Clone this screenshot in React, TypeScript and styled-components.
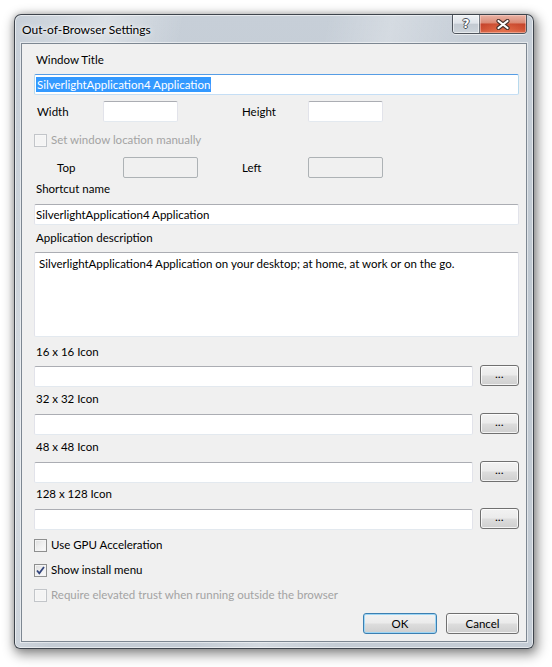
import React from "react";
import styled, { createGlobalStyle, css } from "styled-components";

const FONT = `"Lato", "Noto Sans", sans-serif`;

const GlobalStyle = createGlobalStyle`
  html, body { margin: 0; padding: 0; background: #ffffff; }
  body { font-family: ${FONT}; font-size: 11.5px; color: #000; }
  * { box-sizing: border-box; }
`;

const Page = styled.div`
  width: 552px;
  height: 667px;
  padding: 14px 0 0 14px;
`;

const Window = styled.div`
  width: 520px;
  height: 635px;
  display: flex;
  flex-direction: column;
  padding: 0 6px 6px 6px;
  border: 1px solid rgba(38, 44, 52, 0.85);
  border-radius: 7px 7px 6px 6px;
  background:
    linear-gradient(102deg,
      rgba(255,255,255,0) 0%, rgba(255,255,255,0.35) 14%, rgba(255,255,255,0) 26%,
      rgba(255,255,255,0) 48%, rgba(255,255,255,0.25) 58%, rgba(255,255,255,0) 70%),
    linear-gradient(180deg, #c7cfd8 0%, #bfc8d1 40%, #c4ccd5 100%);
  box-shadow:
    2px 4px 12px 2px rgba(0, 0, 0, 0.42),
    0 0 6px rgba(0, 0, 0, 0.18),
    inset 0 0 0 1px rgba(255, 255, 255, 0.55);
`;

const TitleBar = styled.div`
  height: 28px;
  flex: none;
  display: flex;
  align-items: flex-start;
  justify-content: space-between;
`;

const TitleText = styled.div`
  margin: 7px 0 0 1px;
  font-size: 12px;
  line-height: 16px;
  color: #000;
  text-shadow: 0 0 6px rgba(255, 255, 255, 0.95), 0 0 3px rgba(255, 255, 255, 0.8);
`;

const CaptionGroup = styled.div`
  display: flex;
  height: 19px;
  width: 75px;
  border: 1px solid rgba(58, 64, 72, 0.85);
  border-top: none;
  border-radius: 0 0 4px 4px;
  overflow: hidden;
  box-shadow: 0 1px 0 rgba(255, 255, 255, 0.6);
`;

const CaptionButton = styled.div<{ $kind: "help" | "close" }>`
  height: 100%;
  display: flex;
  align-items: center;
  justify-content: center;
  ${(p) =>
    p.$kind === "help"
      ? css`
          width: 27px;
          border-right: 1px solid rgba(70, 76, 84, 0.7);
          background: linear-gradient(180deg, #eef1f4 0%, #dfe4ea 45%, #c3cad2 52%, #ccd3da 100%);
          box-shadow: inset 0 0 0 1px rgba(255, 255, 255, 0.55);
        `
      : css`
          flex: 1;
          background:
            radial-gradient(ellipse 60% 55% at 50% 85%, rgba(235, 120, 80, 0.75), rgba(235, 120, 80, 0) 100%),
            linear-gradient(180deg, #e9b3a5 0%, #db8c78 42%, #c4432b 52%, #c9472d 78%, #d76a4e 100%);
          box-shadow: inset 0 0 0 1px rgba(255, 220, 210, 0.45);
        `}
`;

const HelpGlyph = styled.span`
  font-family: "DejaVu Sans", sans-serif;
  font-weight: bold;
  font-size: 12px;
  line-height: 12px;
  color: #ffffff;
  text-shadow: 1px 0 0 #4b5159, -1px 0 0 #4b5159, 0 1px 0 #4b5159, 0 -1px 0 #4b5159;
`;

const Client = styled.div`
  flex: 1;
  display: flex;
  flex-direction: column;
  padding: 0 7px 0 12px;
  background: #f0f0f0;
  border: 1px solid #7d8792;
  box-shadow: 0 0 0 1px rgba(255, 255, 255, 0.5);
`;

const Label = styled.div<{ $mt: number; $disabled?: boolean }>`
  margin-top: ${(p) => p.$mt}px;
  height: 16px;
  flex: none;
  line-height: 16px;
  padding-left: 2px;
  white-space: nowrap;
  color: ${(p) => (p.$disabled ? "#a3a3a3" : "#000")};
`;

const TextBox = styled.div<{ $mt?: number; $focused?: boolean; $disabled?: boolean; $width?: number; $grow?: boolean }>`
  margin-top: ${(p) => p.$mt ?? 0}px;
  height: 21px;
  flex: ${(p) => (p.$grow ? "1 1 auto" : "none")};
  ${(p) => (p.$width ? `width: ${p.$width}px;` : "")}
  padding: 2px 1px 0 1px;
  line-height: 15px;
  white-space: nowrap;
  overflow: hidden;
  background: #ffffff;
  border: 1px solid;
  border-radius: 2px;
  border-color: #abadb3 #e2e3ea #e3e9ef #e2e3ea;
  ${(p) =>
    p.$focused &&
    css`
      border-color: #569de5 #b7d9ed #c5def5 #b7d9ed;
    `}
  ${(p) =>
    p.$disabled &&
    css`
      background: #f0f0f0;
      border-color: #adb2b5;
    `}
`;

const Selection = styled.span`
  display: inline-block;
  height: 15px;
  line-height: 15px;
  background: #3399ff;
  color: #ffffff;
  padding: 0 1px;
`;

const TextArea = styled.div`
  margin-top: 6px;
  height: 85px;
  flex: none;
  padding: 3px 4px;
  line-height: 16px;
  background: #ffffff;
  border: 1px solid;
  border-radius: 2px;
  border-color: #abadb3 #e2e3ea #e3e9ef #e2e3ea;
`;

const PairRow = styled.div<{ $mt: number }>`
  margin-top: ${(p) => p.$mt}px;
  height: 21px;
  flex: none;
  display: flex;
  align-items: center;
`;

const PairLabel = styled.div<{ $width: number; $indent: number }>`
  width: ${(p) => p.$width}px;
  flex: none;
  padding-left: ${(p) => p.$indent}px;
  line-height: 16px;
`;

const CheckRow = styled.div<{ $mt: number; $disabled?: boolean }>`
  margin-top: ${(p) => p.$mt}px;
  height: 16px;
  flex: none;
  display: flex;
  align-items: center;
  gap: 4px;
  line-height: 16px;
  white-space: nowrap;
  color: ${(p) => (p.$disabled ? "#a3a3a3" : "#000")};
`;

const CheckBox = styled.div<{ $disabled?: boolean }>`
  width: 13px;
  height: 13px;
  flex: none;
  display: flex;
  align-items: center;
  justify-content: center;
  border: 1px solid ${(p) => (p.$disabled ? "#c2c5c9" : "#8e8f8f")};
  background: ${(p) =>
    p.$disabled
      ? "#f4f4f4"
      : "linear-gradient(135deg, #dcdcdc 0%, #eeeeee 45%, #fbfbfb 100%)"};
  box-shadow: inset 0 0 0 1px ${(p) => (p.$disabled ? "#f7f7f7" : "#f4f4f4")};
`;

const IconRow = styled.div<{ $mt: number }>`
  margin-top: ${(p) => p.$mt}px;
  height: 21px;
  flex: none;
  display: flex;
  align-items: flex-start;
  gap: 7px;
`;

const PushButton = styled.div<{ $default?: boolean; $width: number; $mt?: number }>`
  width: ${(p) => p.$width}px;
  flex: none;
  height: 21px;
  margin-top: ${(p) => p.$mt ?? 0}px;
  display: flex;
  align-items: center;
  justify-content: center;
  line-height: 16px;
  border: 1px solid ${(p) => (p.$default ? "#3c7fb1" : "#707070")};
  border-radius: 3px;
  background: linear-gradient(180deg, #f2f2f2 0%, #ebebeb 48%, #dddddd 52%, #cfcfcf 100%);
  box-shadow: inset 0 0 0 1px ${(p) => (p.$default ? "#9ed6f5" : "rgba(255,255,255,0.75)")};
`;

const Dots = styled.span`
  font-size: 10px;
  line-height: 10px;
  font-weight: bold;
  letter-spacing: 0.5px;
  margin-top: -3px;
`;

const ButtonBar = styled.div`
  margin-top: 10px;
  flex: none;
  display: flex;
  justify-content: flex-end;
  gap: 9px;
`;

const CloseGlyph = () => (
  <svg width="14" height="11" viewBox="0 0 14 11">
    <path d="M2.5 2 L11.5 9 M11.5 2 L2.5 9" stroke="#47302b" strokeWidth="4.2" strokeLinecap="round" />
    <path d="M2.5 2 L11.5 9 M11.5 2 L2.5 9" stroke="#ffffff" strokeWidth="2.2" strokeLinecap="round" />
  </svg>
);

const CheckMark = () => (
  <svg width="9" height="9" viewBox="0 0 9 9">
    <path d="M1 4.5 L3.3 7.3 L8 1" fill="none" stroke="#33457c" strokeWidth="1.8" />
  </svg>
);

const iconRows = [
  { label: "16 x 16 Icon", lt: 7, rt: 6 },
  { label: "32 x 32 Icon", lt: 4, rt: 7 },
  { label: "48 x 48 Icon", lt: 4, rt: 7 },
  { label: "128 x 128 Icon", lt: 3, rt: 7 },
];

export default function App() {
  return (
    <>
      <GlobalStyle />
      <Page>
        <Window>
          <TitleBar>
            <TitleText>Out-of-Browser Settings</TitleText>
            <CaptionGroup>
              <CaptionButton $kind="help">
                <HelpGlyph>?</HelpGlyph>
              </CaptionButton>
              <CaptionButton $kind="close">
                <CloseGlyph />
              </CaptionButton>
            </CaptionGroup>
          </TitleBar>
          <Client>
            <Label $mt={8}>Window Title</Label>
            <TextBox $mt={6} $focused>
              <Selection>SilverlightApplication4 Application</Selection>
            </TextBox>

            <PairRow $mt={6}>
              <PairLabel $width={69} $indent={3}>Width</PairLabel>
              <TextBox $width={75} />
              <PairLabel $width={130} $indent={64}>Height</PairLabel>
              <TextBox $width={75} />
            </PairRow>

            <CheckRow $mt={10} $disabled>
              <CheckBox $disabled />
              <span>Set window location manually</span>
            </CheckRow>

            <PairRow $mt={9}>
              <PairLabel $width={89} $indent={23}>Top</PairLabel>
              <TextBox $width={75} $disabled />
              <PairLabel $width={110} $indent={44}>Left</PairLabel>
              <TextBox $width={75} $disabled />
            </PairRow>

            <Label $mt={3}>Shortcut name</Label>
            <TextBox $mt={7}>SilverlightApplication4 Application</TextBox>

            <Label $mt={5}>Application description</Label>
            <TextArea>
              SilverlightApplication4 Application on your desktop; at home, at work or on the go.
            </TextArea>

            {iconRows.map((r) => (
              <React.Fragment key={r.label}>
                <Label $mt={r.lt}>{r.label}</Label>
                <IconRow $mt={r.rt}>
                  <TextBox $grow />
                  <PushButton $width={39} $mt={-1}>
                    <Dots>...</Dots>
                  </PushButton>
                </IconRow>
              </React.Fragment>
            ))}

            <CheckRow $mt={7}>
              <CheckBox />
              <span>Use GPU Acceleration</span>
            </CheckRow>
            <CheckRow $mt={9}>
              <CheckBox>
                <CheckMark />
              </CheckBox>
              <span>Show install menu</span>
            </CheckRow>
            <CheckRow $mt={9} $disabled>
              <CheckBox $disabled />
              <span>Require elevated trust when running outside the browser</span>
            </CheckRow>

            <ButtonBar>
              <PushButton $width={74} $default>OK</PushButton>
              <PushButton $width={73}>Cancel</PushButton>
            </ButtonBar>
          </Client>
        </Window>
      </Page>
    </>
  );
}
